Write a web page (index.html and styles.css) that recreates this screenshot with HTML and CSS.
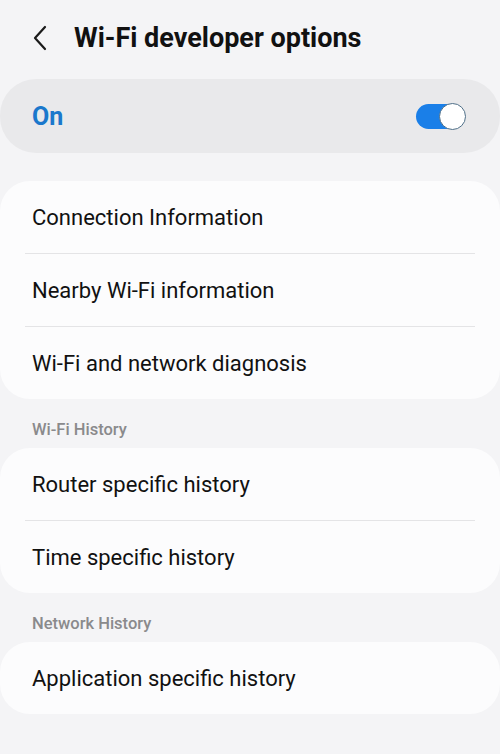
FILE: index.html
```html
<!DOCTYPE html>
<html lang="en">
<head>
<meta charset="UTF-8"/>
<link rel="stylesheet" href="styles.css">
</head>
<body>
<div id="screen">
<div class="topbar">
<svg class="back" width="16" height="26" viewBox="0 0 16 26"><path d="M13 2 L3 13 L13 24" fill="none" stroke="#1a1a1a" stroke-width="2.2" stroke-linecap="round" stroke-linejoin="round"/></svg>
<h1 class="title">Wi-Fi developer options</h1>
</div>

<div class="master">
<span class="masterLabel">On</span>
<div class="toggle"><div class="knob"></div></div>
</div>

<div class="card firstCard">
<div class="row">Connection Information</div>
<div class="row">Nearby Wi-Fi information</div>
<div class="row">Wi-Fi and network diagnosis</div>
</div>

<div class="sectionTitle">Wi-Fi History</div>
<div class="card">
<div class="row">Router specific history</div>
<div class="row">Time specific history</div>
</div>

<div class="sectionTitle">Network History</div>
<div class="card">
<div class="row">Application specific history</div>
</div>
</div>
</body>
</html>
```

FILE: styles.css
```css
body {
	margin:0;
	background:#f4f4f6;
	font-family:Roboto, "Noto Sans", sans-serif;
	color:#111;
}

#screen {
	width:500px;
	height:754px;
	overflow:hidden;
}

.topbar {
	display:flex;
	align-items:center;
	height:79px;
	padding:0 0 4px 32px;
	box-sizing:border-box;
}

.back {
	margin-right:26px;
}

.title {
	margin:0;
	font-size:27px;
	font-weight:700;
	color:#111;
}

.master {
	display:flex;
	align-items:center;
	justify-content:space-between;
	height:74px;
	background:#e9e9eb;
	border-radius:36px;
	padding:0 40px 0 32px;
	box-sizing:border-box;
}

.masterLabel {
	font-size:25px;
	font-weight:700;
	color:#1b78cc;
}

.toggle {
	position:relative;
	width:44px;
	height:25px;
	background:#1a7fe8;
	border-radius:13px;
}

.knob {
	position:absolute;
	right:-6px;
	top:-1px;
	width:25px;
	height:25px;
	background:#fff;
	border:1.5px solid #4f6f88;
	border-radius:50%;
}

.card {
	background:#fcfcfd;
	border-radius:30px;
}

.firstCard {
	margin-top:28px;
}

.row {
	height:72px;
	display:flex;
	align-items:center;
	padding-left:32px;
	font-size:22px;
	margin:0 25px 0 0;
}

.row + .row {
	border-top:1px solid #e4e4e6;
	margin-left:25px;
	padding-left:7px;
}

.sectionTitle {
	padding:22px 32px 9px;
	line-height:18px;
	font-size:16.5px;
	font-weight:500;
	color:#8a8a8c;
}
```
